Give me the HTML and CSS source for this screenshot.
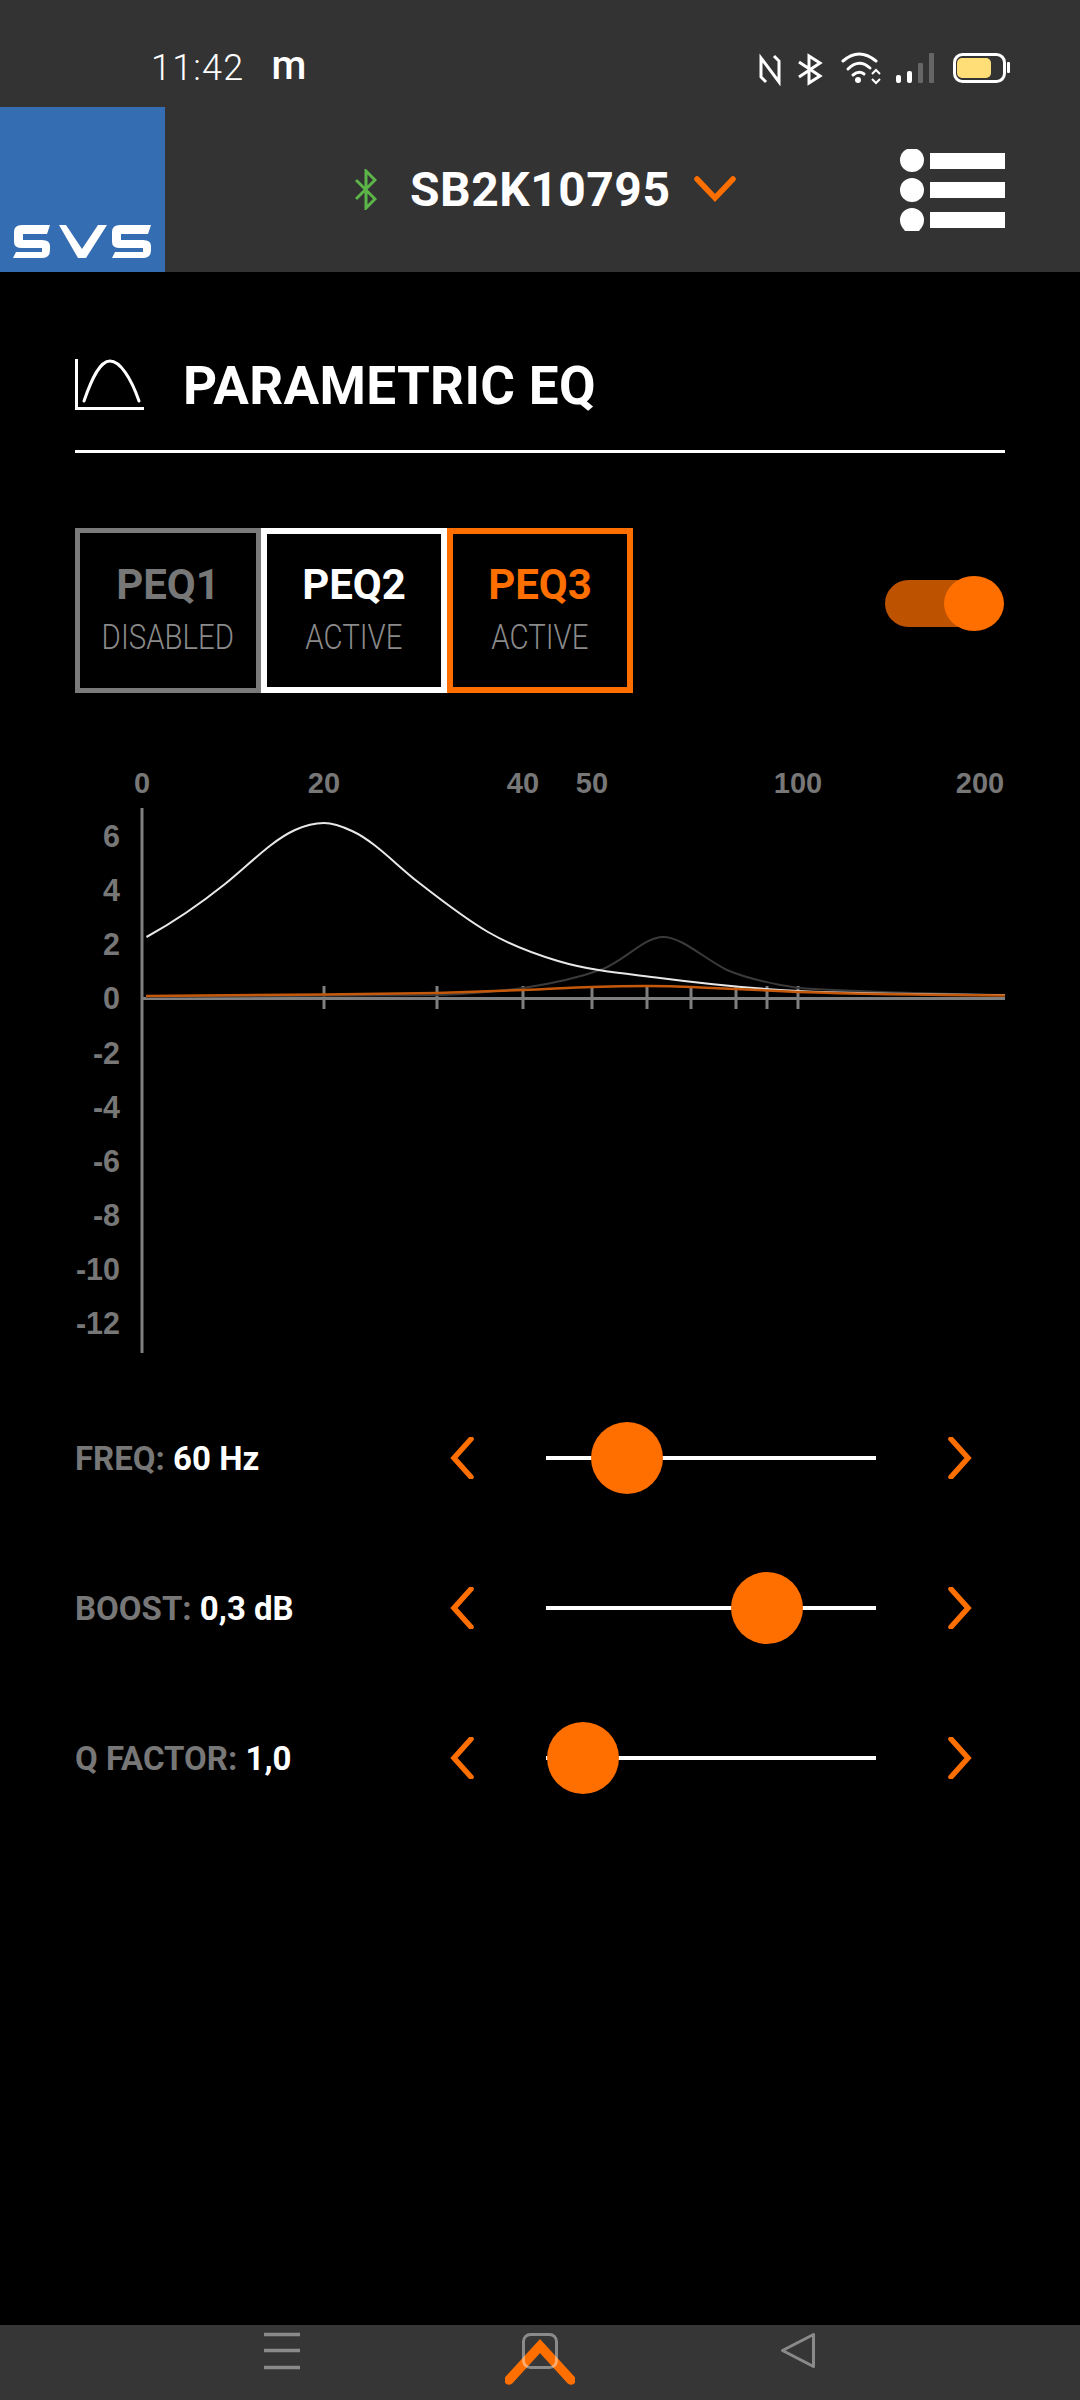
FILE: index.html
```html
<!DOCTYPE html>
<html lang="en">
<head>
<meta charset="utf-8">
<title>Parametric EQ</title>
<link rel="stylesheet" href="styles.css">
</head>
<body>
<div class="screen">
  <div class="status">
    <span class="time">11:42</span>
    <span class="notif">m</span>
    <svg class="status-icons" width="252" height="36" viewBox="760 50 252 36">
      <g fill="none" stroke="#fff" stroke-width="3">
        <path d="M767 82 L762 77 V58 L780 82 V61 L775 56"/>
        <path d="M800 62 L821 76 L810 83 V56 L821 63 L800 77"/>
        <path stroke-linecap="round" d="M844 61 Q860 47 877 61"/>
        <path stroke-linecap="round" d="M849 69 Q860 58 871 68"/>
        <path stroke-linecap="round" d="M854 75 Q860 70 865 74"/>
        <path stroke-width="2" d="M873 74 L877 70 L881 74 M873 79 L877 83 L881 79"/>
        <rect x="955.5" y="54.5" width="50" height="27" rx="8"/>
      </g>
      <circle cx="859" cy="80" r="3" fill="#fff"/>
      <rect x="897" y="75" width="5" height="8" rx="2" fill="#fff"/>
      <rect x="908" y="71" width="5" height="12" rx="2" fill="#fff"/>
      <rect x="919" y="63" width="5" height="20" rx="1" fill="#666"/>
      <rect x="930" y="53" width="5" height="30" rx="1" fill="#666"/>
      <rect x="958" y="58" width="34" height="20" rx="5" fill="#ffdd77"/>
      <rect x="1008" y="62" width="3" height="11" rx="1" fill="#fff"/>
    </svg>
  </div>
  <header class="appbar">
    <div class="logo">
      <svg width="165" height="165" viewBox="0 107 165 165">
        <g fill="#fff">
          <path d="M22 225H50L47 234H23V240H42Q50 240 50 246V250Q50 258 42 258H13L16 252H42V248H22Q14 248 14 242V232Q14 225 22 225Z"/>
          <path d="M59 225H66L82 249L98 225H107L86 258H78Z"/>
          <path d="M120 225H151L148 234H121V240H143Q151 240 151 246V250Q151 258 143 258H112L115 252H143V248H120Q112 248 112 242V232Q112 225 120 225Z"/>
        </g>
      </svg>
    </div>
    <div class="device">
      <svg class="bt" width="22" height="41" viewBox="355 169 22 41">
        <path fill="none" stroke="#5bb548" stroke-width="3" d="M356 180L375 199L366 208V171L375 180L356 199"/>
      </svg>
      <span class="device-name">SB2K10795</span>
      <svg class="caret" width="42" height="26" viewBox="0 0 42 26">
        <path fill="none" stroke="#ff6f00" stroke-width="5.5" stroke-linecap="round" stroke-linejoin="miter" d="M3 3L21 22L39 3"/>
      </svg>
    </div>
    <svg class="menu" width="105" height="84" viewBox="900 149 105 84">
      <g fill="#fff">
        <circle cx="912" cy="160" r="12"/>
        <circle cx="912" cy="190" r="12"/>
        <path d="M900 220a12 12 0 0 1 24 0a12 12 0 0 1-2 7l-3 4h-14l-3-4a12 12 0 0 1-2-7z"/>
        <rect x="930" y="153" width="75" height="16"/>
        <rect x="930" y="182" width="75" height="16"/>
        <rect x="930" y="212" width="75" height="16"/>
      </g>
    </svg>
  </header>
  <main class="content">
    <div class="title-row">
      <svg class="title-icon" width="70" height="51" viewBox="75 359 70 51">
        <g fill="none" stroke="#fff">
          <path stroke-width="3" d="M76.500 359V408.500H144"/>
          <path stroke-width="3" stroke-linecap="round" d="M84 401C92 378 100 361 110 361C120 361 131 378 139 401"/>
        </g>
      </svg>
      <h1 class="title">PARAMETRIC EQ</h1>
    </div>
    <div class="tab-row">
      <div class="tab tab-disabled"><span class="tab-name">PEQ1</span><span class="tab-state">DISABLED</span></div>
      <div class="tab tab-white"><span class="tab-name">PEQ2</span><span class="tab-state">ACTIVE</span></div>
      <div class="tab tab-orange"><span class="tab-name">PEQ3</span><span class="tab-state">ACTIVE</span></div>
      <div class="toggle"><span class="toggle-thumb"></span></div>
    </div>
    <svg class="chart" width="930" height="600" viewBox="75 760 930 600">
      <g class="axis-text axis-x" text-anchor="middle">
        <text x="142" y="793">0</text>
        <text x="324" y="793">20</text>
        <text x="523" y="793">40</text>
        <text x="592" y="793">50</text>
        <text x="798" y="793">100</text>
        <text x="980" y="793">200</text>
      </g>
      <g class="axis-text" text-anchor="end">
        <text x="120" y="847">6</text>
        <text x="120" y="901">4</text>
        <text x="120" y="955">2</text>
        <text x="120" y="1009">0</text>
        <text x="120" y="1064">-2</text>
        <text x="120" y="1118">-4</text>
        <text x="120" y="1172">-6</text>
        <text x="120" y="1226">-8</text>
        <text x="120" y="1280">-10</text>
        <text x="120" y="1334">-12</text>
      </g>
      <g stroke="#7f7f7f" stroke-width="3">
        <path d="M142 808V1353"/>
        <path d="M142 998.500H1005"/>
        <path d="M324 986V1009M437 986V1009M523 986V1009M592 986V1009M647 986V1009M691 986V1009M736 986V1009M767 986V1009M798 986V1009"/>
      </g>
      <g fill="none" stroke-linejoin="round">
        <path stroke="#3a3a3a" stroke-width="2" d="M146 997C250 996.500 350 996 440 995C470 994 500 991 523 988C550 984 578 978 603 969C625 960 645 937 663 937C682 937 703 958 727 970C748 979 772 984 798 988C860 992 940 994 1005 995"/>
        <path stroke="#e8e8e8" stroke-width="2" d="M146.500 937C172.700 922.600 198.800 905 225 884C248.300 865.300 271.700 840.500 295 830C304.700 825.600 314.300 823 324 823C333.300 823 342.700 826.600 352 831C374 840.900 396 864.800 418 882C441.300 900.200 464.700 918.500 488 932C511.300 945.500 534.700 954 558 961C592 971.200 626 973.600 660 978C706 984 752 988.700 798 991C867 994.400 936 994.300 1005 995"/>
        <path stroke="#c5590b" stroke-width="2.500" d="M146 996L324 994.500L437 993C470 992 500 991 523 990C550 989 570 987.500 592 987C612 986.300 630 986 647 986C662 986 676 986.300 691 987C706 987.600 720 988.300 736 989C760 990.200 778 991 798 992C860 994 940 995 1005 995.500"/>
      </g>
    </svg>
    <div class="control">
      <div class="control-label"><span class="key">FREQ:</span> <span class="val">60 Hz</span></div>
      <svg class="arrow" width="24" height="42" viewBox="0 0 24 42"><path d="M21 2L4 21L21 40"/></svg>
      <div class="track"><span class="thumb" style="left:81px"></span></div>
      <svg class="arrow" width="24" height="42" viewBox="0 0 24 42"><path d="M3 2L20 21L3 40"/></svg>
    </div>
    <div class="control">
      <div class="control-label"><span class="key">BOOST:</span> <span class="val">0,3 dB</span></div>
      <svg class="arrow" width="24" height="42" viewBox="0 0 24 42"><path d="M21 2L4 21L21 40"/></svg>
      <div class="track"><span class="thumb" style="left:221px"></span></div>
      <svg class="arrow" width="24" height="42" viewBox="0 0 24 42"><path d="M3 2L20 21L3 40"/></svg>
    </div>
    <div class="control">
      <div class="control-label"><span class="key">Q FACTOR:</span> <span class="val">1,0</span></div>
      <svg class="arrow" width="24" height="42" viewBox="0 0 24 42"><path d="M21 2L4 21L21 40"/></svg>
      <div class="track"><span class="thumb" style="left:37px"></span></div>
      <svg class="arrow" width="24" height="42" viewBox="0 0 24 42"><path d="M3 2L20 21L3 40"/></svg>
    </div>
  </main>
  <nav class="navbar">
    <svg class="nav-menu" width="36" height="75" viewBox="264 2325 36 75">
      <path stroke="#8a8a8a" stroke-width="3.500" d="M264 2334.500H300M264 2350.500H300M264 2367.500H300"/>
    </svg>
    <svg class="nav-home" width="70" height="75" viewBox="505 2325 70 75">
      <path fill="none" stroke="#ff6f00" stroke-width="9.500" stroke-linejoin="miter" d="M509 2380L540 2346L571 2380" stroke-linecap="round"/>
      <rect x="523.500" y="2334.500" width="33" height="33" rx="7" fill="none" stroke="#fff" stroke-opacity=".42" stroke-width="3"/>
    </svg>
    <svg class="nav-back" width="36" height="75" viewBox="780 2325 36 75">
      <path fill="none" stroke="#8a8a8a" stroke-width="3" stroke-linejoin="round" d="M813.500 2334.500V2366.500L782.500 2350.500Z"/>
    </svg>
  </nav>
</div>
</body>
</html>
```
FILE: styles.css
```css
* { box-sizing: border-box; }
html, body { margin: 0; padding: 0; background: #000; }
body { font-family: Roboto, "Liberation Sans", sans-serif; color: #fff; }
.screen { width: 1080px; height: 2400px; display: flex; flex-direction: column; overflow: hidden; }

.status { height: 107px; background: #333; display: flex; align-items: flex-start; padding-left: 151px; position: relative; }
.time { font-size: 36px; font-weight: 300; line-height: 42px; margin-top: 47px; letter-spacing: 1.2px; }
.notif { font-size: 40px; font-weight: 500; line-height: 42px; margin-top: 45px; margin-left: 27px; }
.status-icons { margin-left: auto; margin-right: 69px; margin-top: 50px; }

.appbar { height: 165px; background: #333; display: flex; align-items: center; }
.logo { width: 165px; height: 165px; background: #356db2; flex: none; }
.logo svg { display: block; }
.device { display: flex; align-items: center; margin-left: 190px; }
.device-name { font-size: 48px; font-weight: 700; line-height: 55px; margin-left: 33px; letter-spacing: .5px; }
.caret { margin-left: 24px; margin-top: -2px; }
.menu { margin-left: auto; margin-right: 75px; margin-top: 3px; }

.content { flex: 1; padding: 0 75px; display: flex; flex-direction: column; background: #000; }
.title-row { height: 181px; padding-top: 87px; display: flex; align-items: flex-start; border-bottom: 3px solid #fff; }
.title { margin: -3px 0 0 38px; font-size: 53px; font-weight: 700; line-height: 60px; letter-spacing: .35px; }

.tab-row { display: flex; align-items: flex-start; margin-top: 75px; position: relative; }
.tab { width: 186px; height: 165px; display: flex; flex-direction: column; align-items: center; padding-top: 27px; border: 6px solid #fff; }
.tab-disabled { border: 5px solid #7a7a7a; padding-top: 28px; }
.tab-white { border-color: #fff; }
.tab-orange { border-color: #ff6f00; }
.tab-name { font-size: 42px; font-weight: 700; line-height: 48px; }
.tab-disabled .tab-name { color: #777; }
.tab-orange .tab-name { color: #ff6f00; }
.tab-state { font-size: 35px; font-weight: 300; line-height: 41px; color: #8a8a8a; margin-top: 8px; transform: scaleX(.84); white-space: nowrap; }
.toggle { margin-left: auto; margin-top: 52px; margin-right: 2px; width: 118px; height: 47px; background: #bd5300; border-radius: 24px; position: relative; }
.toggle-thumb { position: absolute; right: -1px; top: -4px; width: 60px; height: 55px; border-radius: 50%; background: #ff6f00; }

.chart { display: block; margin-top: 67px; flex: none; }
.axis-text { font-family: "Liberation Sans", Arial, sans-serif; font-weight: 700; font-size: 30.5px; fill: #777; }
.axis-x { font-size: 29px; }

.control { display: flex; align-items: center; height: 150px; }
.chart + .control { margin-top: 23px; }
.control-label { width: 375px; font-size: 33px; font-weight: 700; line-height: 38px; white-space: nowrap; margin-top: 2px; }
.key { color: #777; }
.val { color: #fff; }
.arrow { flex: none; }
.arrow path { fill: none; stroke: #ff6f00; stroke-width: 5.5; stroke-linecap: round; }
.track { width: 330px; height: 4px; background: #fff; margin: 0 72px; position: relative; flex: none; }
.thumb { position: absolute; top: 50%; width: 72px; height: 72px; margin: -36px 0 0 -36px; border-radius: 50%; background: #ff6f00; }

.navbar { height: 75px; background: #363636; display: flex; align-items: flex-start; padding-left: 264px; }
.nav-menu, .nav-home, .nav-back { display: block; flex: none; }
.nav-home { margin-left: 205px; }
.nav-back { margin-left: 205px; }
```
